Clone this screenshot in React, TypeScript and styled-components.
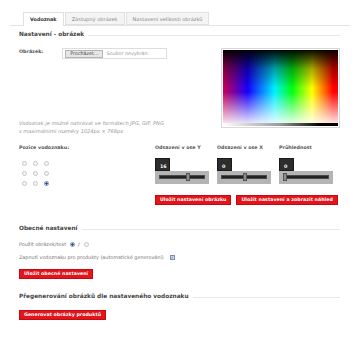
import React from 'react';
import styled, { createGlobalStyle } from 'styled-components';

const GlobalStyle = createGlobalStyle`
  html, body {
    margin: 0;
    padding: 0;
    background: #fff;
  }
  body {
    font-family: "DejaVu Sans", Verdana, sans-serif;
    color: #555;
  }
`;

interface SliderData {
  label: string;
  value: number;
  pos: number;
}

const sliders: SliderData[] = [
  { label: 'Odsazení v ose Y', value: 16, pos: 62 },
  { label: 'Odsazení v ose X', value: 0, pos: 50 },
  { label: 'Průhlednost', value: 0, pos: 0 },
];

const App: React.FC = () => {
  const positions = [0, 1, 2, 3, 4, 5, 6, 7, 8];

  return (
    <Page>
      <GlobalStyle />
      <TabBar>
        <Tab active>Vodoznak</Tab>
        <Tab>Zástupný obrázek</Tab>
        <Tab>Nastavení velikosti obrázků</Tab>
      </TabBar>

      <Content>
        <SectionTitle>
          <span>Nastavení - obrázek</span>
        </SectionTitle>

        <ImageSection>
          <ImageLeft>
            <FieldRow>
              <FieldLabel>Obrázek:</FieldLabel>
              <FileInput>
                <BrowseButton>Procházet...</BrowseButton>
                <FileName>Soubor nevybrán.</FileName>
              </FileInput>
            </FieldRow>
            <HelpText>
              Vodoznak je možné nahrávat ve formátech JPG, GIF, PNG
              <br />s maximálními rozměry 1024px × 768px
            </HelpText>
          </ImageLeft>
          <Preview>
            <PreviewStrip />
          </Preview>
        </ImageSection>

        <PositionSection>
          <PositionLeft>
            <FieldLabel>Pozice vodoznaku:</FieldLabel>
            <RadioGrid>
              {positions.map((p) => (
                <Radio key={p} checked={p === 8} />
              ))}
            </RadioGrid>
          </PositionLeft>
          <PositionRight>
            <SliderRow>
              {sliders.map((s) => (
                <SliderGroup key={s.label}>
                  <FieldLabel>{s.label}</FieldLabel>
                  <ValueBox>{s.value}</ValueBox>
                  <SliderBox>
                    <Track>
                      <Handle style={{ left: `${s.pos}%` }} />
                    </Track>
                  </SliderBox>
                </SliderGroup>
              ))}
            </SliderRow>
            <ButtonRow>
              <RedButton>Uložit nastavení obrázku</RedButton>
              <RedButton>Uložit nastavení a zobrazit náhled</RedButton>
            </ButtonRow>
          </PositionRight>
        </PositionSection>

        <SectionTitle top={18}>
          <span>Obecné nastavení</span>
        </SectionTitle>
        <OptionRow top={7}>
          Použít obrázek/text
          <Radio checked inline />
          <Slash>/</Slash>
          <Radio inline />
        </OptionRow>
        <OptionRow top={5}>
          Zapnutí vodoznaku pro produkty (automatické generování)
          <Checkbox>✓</Checkbox>
        </OptionRow>
        <ButtonRow top={8}>
          <RedButton>Uložit obecné nastavení</RedButton>
        </ButtonRow>

        <SectionTitle top={12}>
          <span>Přegenerování obrázků dle nastaveného vodoznaku</span>
        </SectionTitle>
        <ButtonRow top={9}>
          <RedButton>Generovat obrázky produktů</RedButton>
        </ButtonRow>
      </Content>
    </Page>
  );
};

const Page = styled.div`
  width: 360px;
  height: 340px;
  padding: 12px 10px 0;
  box-sizing: border-box;
  overflow: hidden;
`;

const TabBar = styled.div`
  display: flex;
  padding-left: 13px;
  border-bottom: 1px solid #e4e4e4;
  height: 13px;
`;

const Tab = styled.div<{ active?: boolean }>`
  height: ${(p) => (p.active ? '14px' : '13px')};
  box-sizing: border-box;
  padding: 0 6px;
  margin-right: 1px;
  line-height: 12px;
  font-size: ${(p) => (p.active ? '4.9px' : '5.1px')};
  font-weight: ${(p) => (p.active ? 'bold' : 'normal')};
  color: ${(p) => (p.active ? '#333' : '#8a8a8a')};
  background: ${(p) => (p.active ? '#fff' : '#f4f4f4')};
  border: 1px solid #e0e0e0;
  border-bottom: ${(p) => (p.active ? 'none' : '1px solid #e0e0e0')};
  white-space: nowrap;
`;

const Content = styled.div`
  padding: 0 10px 0 9px;
`;

const SectionTitle = styled.div<{ top?: number }>`
  display: flex;
  align-items: center;
  height: 10px;
  margin-top: ${(p) => p.top ?? 3}px;
  font-size: 5.8px;
  font-weight: bold;
  color: #444;
  white-space: nowrap;

  &::after {
    content: '';
    flex: 1;
    margin-left: 4px;
    margin-top: 2px;
    border-top: 1px solid #e8e8e8;
  }
`;

const ImageSection = styled.div`
  display: flex;
  margin-top: 9px;
`;

const ImageLeft = styled.div`
  width: 202px;
  flex-shrink: 0;
  display: flex;
  flex-direction: column;
`;

const FieldRow = styled.div`
  display: flex;
  align-items: flex-start;
  height: 12px;
`;

const FieldLabel = styled.div`
  font-size: 4.8px;
  font-weight: bold;
  color: #555;
  line-height: 8px;
  white-space: nowrap;
`;

const FileInput = styled.div`
  margin-left: 19px;
  width: 105px;
  height: 11px;
  box-sizing: border-box;
  border: 1px solid #ddd;
  display: flex;
  align-items: center;
  padding-left: 2px;
  font-size: 4.8px;
`;

const BrowseButton = styled.span`
  background: #e6e6e6;
  border: 1px solid #b4b4b4;
  color: #444;
  padding: 0 4px;
  line-height: 6px;
`;

const FileName = styled.span`
  margin-left: 3px;
  color: #999;
`;

const HelpText = styled.div`
  margin-top: 59px;
  font-size: 5.1px;
  font-style: italic;
  line-height: 8px;
  color: #999;
  white-space: nowrap;
`;

const Preview = styled.div`
  width: 119px;
  height: 80px;
  flex-shrink: 0;
  box-sizing: border-box;
  border: 1px solid #d8d8d8;
  padding: 1px;
  background-clip: content-box;
  background-image:
    linear-gradient(to bottom, #000 0%, rgba(0, 0, 0, 0.35) 25%, rgba(0, 0, 0, 0) 50%, rgba(255, 255, 255, 0) 55%, #fff 100%),
    linear-gradient(to right, #d0004a 0%, #1500ff 22%, #00f0ff 45%, #00ff10 60%, #ffff00 77%, #ff0000 95%, #ff0000 100%);
  display: flex;
  flex-direction: column;
  justify-content: flex-end;
`;

const PreviewStrip = styled.div`
  height: 3px;
  background: linear-gradient(to right, #fff 0%, #999 50%, #000 85%, #000 100%);
`;

const PositionSection = styled.div`
  display: flex;
  margin-top: 9px;
`;

const PositionLeft = styled.div`
  width: 136px;
  flex-shrink: 0;
`;

const RadioGrid = styled.div`
  display: grid;
  grid-template-columns: repeat(3, 11px);
  grid-auto-rows: 10px;
  align-items: center;
  margin: 6px 0 0 3px;
`;

const Radio = styled.span<{ checked?: boolean; inline?: boolean }>`
  display: inline-block;
  width: 5px;
  height: 5px;
  box-sizing: border-box;
  border-radius: 50%;
  border: 1px solid ${(p) => (p.checked ? '#7d93b8' : '#c6c6c6')};
  background: ${(p) => (p.checked ? 'radial-gradient(circle, #1c4da6 0 45%, #e8eef8 60%)' : '#f6f6f6')};
  margin-left: ${(p) => (p.inline ? '4px' : '0')};
`;

const PositionRight = styled.div`
  display: flex;
  flex-direction: column;
`;

const SliderRow = styled.div`
  display: flex;
  gap: 8px;
`;

const SliderGroup = styled.div`
  width: 54px;
  display: flex;
  flex-direction: column;
  align-items: flex-start;
`;

const ValueBox = styled.div`
  margin-top: 6px;
  width: 15px;
  height: 13px;
  box-sizing: border-box;
  background: #2d2d2d;
  border: 1px solid #1a1a1a;
  color: #fff;
  font-size: 4.8px;
  font-weight: bold;
  padding: 5px 0 0 4px;
`;

const SliderBox = styled.div`
  width: 54px;
  height: 13px;
  box-sizing: border-box;
  background: #b4b4b4;
  padding: 4px 4px;
`;

const Track = styled.div`
  position: relative;
  height: 4px;
  background: #222;
  border: 1px solid #4a4a4a;
  box-sizing: border-box;
`;

const Handle = styled.span`
  position: absolute;
  top: -3px;
  width: 4px;
  height: 8px;
  margin-left: -1px;
  box-sizing: border-box;
  background: #8c8c8c;
  border: 1px solid #555;
`;

const ButtonRow = styled.div<{ top?: number }>`
  display: flex;
  gap: 5px;
  margin-top: ${(p) => p.top ?? 11}px;
`;

const RedButton = styled.div`
  height: 10px;
  box-sizing: border-box;
  padding: 0 4px;
  background: #e2141c;
  border: 1px solid #c40b12;
  color: #fff;
  font-size: 4.75px;
  font-weight: bold;
  line-height: 8px;
  white-space: nowrap;
`;

const OptionRow = styled.div<{ top?: number }>`
  display: flex;
  align-items: center;
  height: 8px;
  margin-top: ${(p) => p.top ?? 5}px;
  font-size: 4.9px;
  color: #777;
  white-space: nowrap;
`;

const Slash = styled.span`
  margin-left: 3px;
  color: #555;
`;

const Checkbox = styled.span`
  display: inline-flex;
  align-items: center;
  justify-content: center;
  width: 5px;
  height: 5px;
  margin-left: 6px;
  box-sizing: border-box;
  border: 1px solid #7d8fb0;
  background: #d6def0;
  color: #1c3f8a;
  font-size: 4px;
  font-weight: bold;
`;

export default App;
